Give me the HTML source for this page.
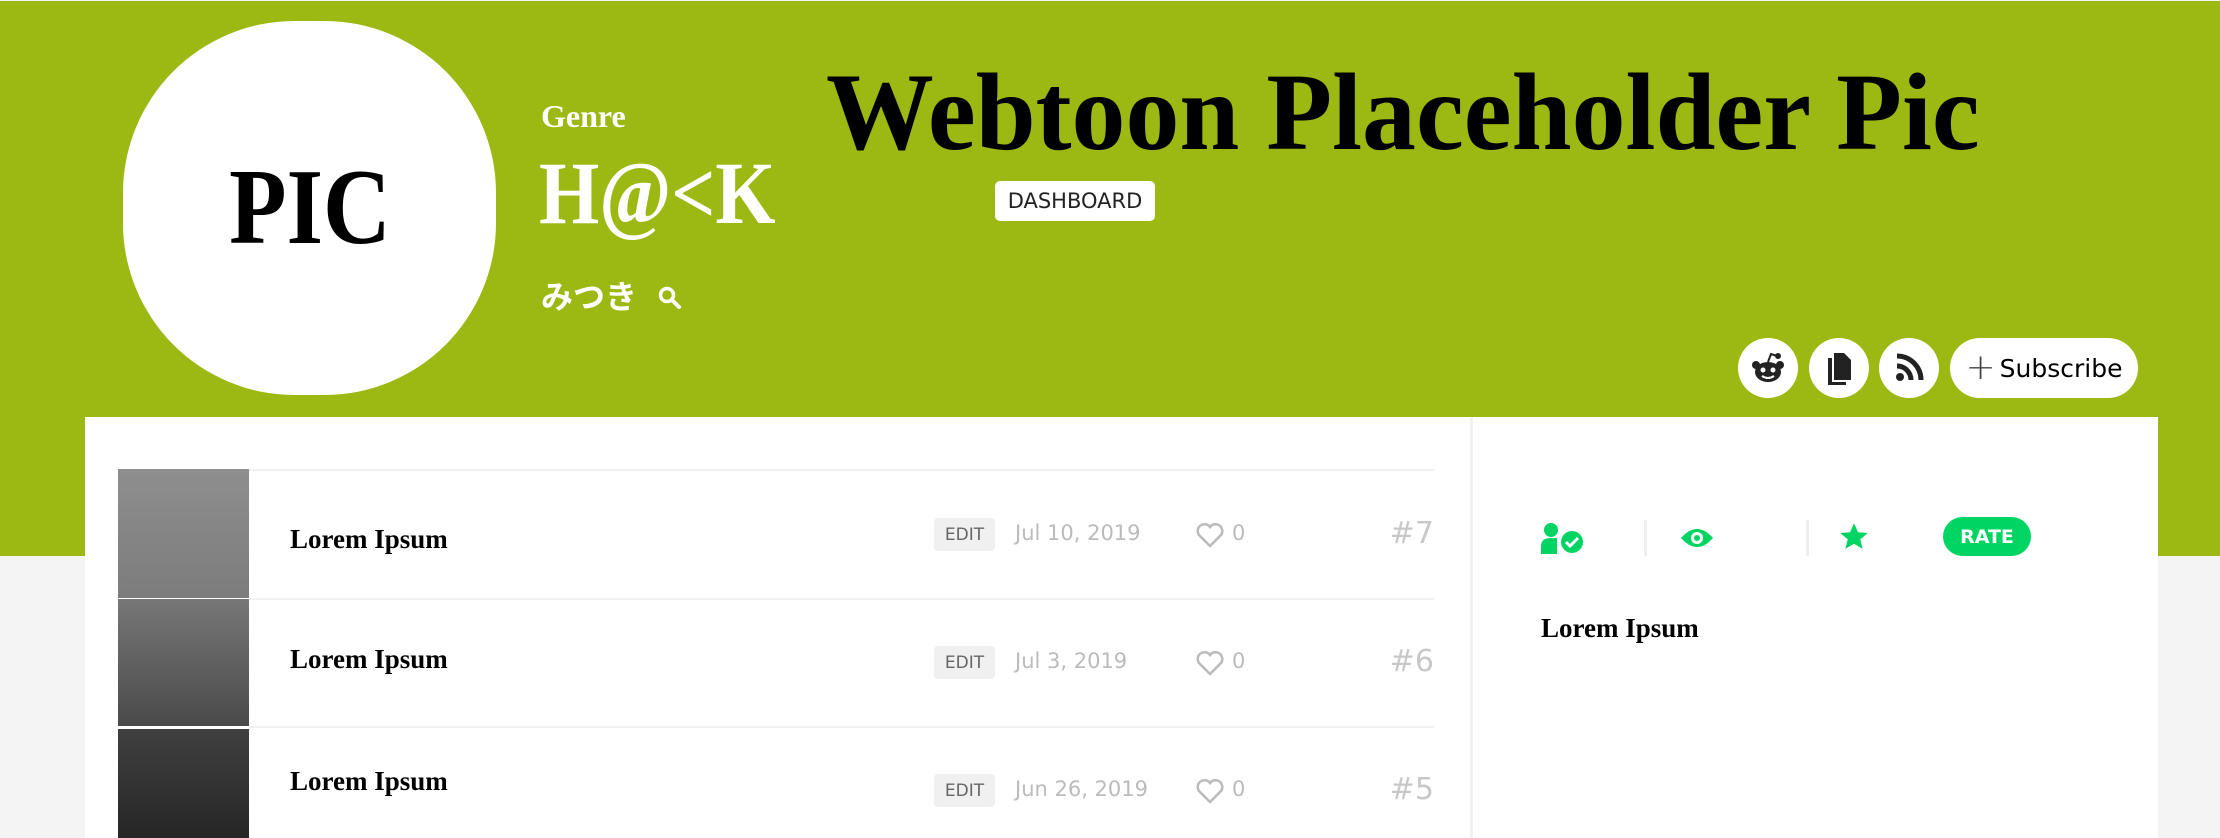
<!DOCTYPE html>
<html><head><meta charset="utf-8"><style>
*{margin:0;padding:0;box-sizing:border-box}
body{width:2220px;height:838px;overflow:hidden;background:#f4f4f4;position:relative;font-family:"Liberation Sans",sans-serif}
.hdr{position:absolute;left:0;top:1px;width:2220px;height:555px;background:#9cb813}
.a{position:absolute}
.serif{font-family:"Liberation Serif",serif;font-weight:bold}
.pic{left:123px;top:21px;width:373px;height:374px;background:#fff;border-radius:46%;display:flex;align-items:center;justify-content:center;color:#000}
.circ{width:60px;height:60px;border-radius:50%;background:#fff;top:338px;display:flex;align-items:center;justify-content:center}
.panel{left:85px;top:417px;width:2073px;height:421px;background:#fff}
.line{height:2px;background:#f1f1f1;left:249px;width:1185px}
.thumb{left:118px;width:131px}
.row-t{left:290px;font-size:27px;color:#000}
.edit{left:934px;width:61px;height:33px;background:#f0f0f0;border-radius:4px;font-size:17px;color:#666;display:flex;align-items:center;justify-content:center;font-family:"DejaVu Sans",sans-serif}
.date{left:1015px;font-size:21px;color:#bbb;font-family:"DejaVu Sans",sans-serif}
.heart{left:1196px}
.zero{left:1232px;font-size:21px;color:#bbb;font-family:"DejaVu Sans",sans-serif}
.num{right:786px;font-size:30px;color:#c8c8c8;font-family:"DejaVu Sans",sans-serif}
</style></head><body>
<div class="hdr"></div>
<div class="a pic serif"><span style="font-size:108px;display:inline-block;transform:scaleX(0.87)">PIC</span></div>
<div class="a serif" style="left:541px;top:98px;font-size:32px;color:#fff">Genre</div>
<div class="a serif" style="left:539px;top:146px;font-size:89px;color:#fff;line-height:1.1;transform:scaleX(0.87);transform-origin:left top;white-space:nowrap">H@&lt;K</div>
<div class="a" style="left:541px;top:272px;font-size:32px;font-weight:bold;color:#fff;font-family:'Liberation Sans','Noto Sans CJK JP',sans-serif">みつき</div>
<svg class="a" style="left:656px;top:284px" width="28" height="28" viewBox="0 0 28 28"><circle cx="11" cy="11" r="6.5" fill="none" stroke="#fff" stroke-width="3.5"/><path d="M16 16l7 7" stroke="#fff" stroke-width="4" stroke-linecap="round"/></svg>
<div class="a serif" style="left:826px;top:52px;font-size:110px;color:#000;line-height:1.1;white-space:nowrap;transform:scaleX(0.98);transform-origin:left top">Webtoon Placeholder Pic</div>
<div class="a" style="left:995px;top:181px;width:160px;height:40px;background:#fff;border-radius:5px;font-size:21px;color:#222;display:flex;align-items:center;justify-content:center;font-family:'DejaVu Sans',sans-serif">DASHBOARD</div>
<div class="a circ" style="left:1738px"><svg width="36" height="36" viewBox="0 0 36 36"><ellipse cx="18" cy="22" rx="13" ry="10" fill="#222"/><circle cx="6" cy="15" r="4" fill="#222"/><circle cx="30" cy="15" r="4" fill="#222"/><path d="M18 12l3-8 6 2" stroke="#222" stroke-width="2" fill="none"/><circle cx="28" cy="6" r="3" fill="#222"/><circle cx="13" cy="20" r="2.5" fill="#fff"/><circle cx="23" cy="20" r="2.5" fill="#fff"/><path d="M12 26q6 4 12 0" stroke="#fff" stroke-width="2" fill="none"/></svg></div>
<div class="a circ" style="left:1809px"><svg width="30" height="34" viewBox="0 0 30 34"><path d="M10 2h10l7 7v20h-17z" fill="#222"/><path d="M4 7h4v24h14v3h-18z" fill="#222"/></svg></div>
<div class="a circ" style="left:1879px"><svg width="30" height="30" viewBox="0 0 30 30"><circle cx="6" cy="24" r="4" fill="#222"/><path d="M3 13a14 14 0 0 1 14 14" stroke="#222" stroke-width="5" fill="none"/><path d="M3 3a24 24 0 0 1 24 24" stroke="#222" stroke-width="5" fill="none"/></svg></div>
<div class="a" style="left:1950px;top:338px;width:188px;height:60px;border-radius:30px;background:#fff;display:flex;align-items:center;justify-content:center;font-size:25px;color:#000;font-family:'DejaVu Sans',sans-serif"><span style="font-size:36px;font-weight:100;color:#444;margin-right:4px;line-height:1">+</span>Subscribe</div>
<div class="a panel"></div>
<div class="a" style="left:1470px;top:417px;width:3px;height:421px;background:#f1f1f1"></div>
<div class="a line" style="top:469px"></div>
<div class="a line" style="top:598px"></div>
<div class="a line" style="top:726px"></div>
<div class="a thumb" style="top:469px;height:129px;background:linear-gradient(#8e8e8e,#7c7c7c)"></div>
<div class="a thumb" style="top:599px;height:127px;background:linear-gradient(#777,#4a4a4a)"></div>
<div class="a thumb" style="top:729px;height:109px;background:linear-gradient(#404040,#262626)"></div>
<div class="a row-t serif" style="top:524px">Lorem Ipsum</div>
<div class="a row-t serif" style="top:644px">Lorem Ipsum</div>
<div class="a row-t serif" style="top:766px">Lorem Ipsum</div>
<div class="a edit" style="top:518px">EDIT</div>
<div class="a edit" style="top:646px">EDIT</div>
<div class="a edit" style="top:774px">EDIT</div>
<div class="a date" style="top:521px">Jul 10, 2019</div>
<div class="a date" style="top:649px">Jul 3, 2019</div>
<div class="a date" style="top:777px">Jun 26, 2019</div>
<svg class="a heart" style="top:522px" width="28" height="26" viewBox="0 0 28 26"><path d="M14 24L3 13a6 6 0 0 1 11-8a6 6 0 0 1 11 8z" fill="none" stroke="#bbb" stroke-width="2.5"/></svg>
<svg class="a heart" style="top:650px" width="28" height="26" viewBox="0 0 28 26"><path d="M14 24L3 13a6 6 0 0 1 11-8a6 6 0 0 1 11 8z" fill="none" stroke="#bbb" stroke-width="2.5"/></svg>
<svg class="a heart" style="top:778px" width="28" height="26" viewBox="0 0 28 26"><path d="M14 24L3 13a6 6 0 0 1 11-8a6 6 0 0 1 11 8z" fill="none" stroke="#bbb" stroke-width="2.5"/></svg>
<div class="a zero" style="top:521px">0</div>
<div class="a zero" style="top:649px">0</div>
<div class="a zero" style="top:777px">0</div>
<div class="a num" style="top:516px">#7</div>
<div class="a num" style="top:644px">#6</div>
<div class="a num" style="top:772px">#5</div>
<svg class="a" style="left:1541px;top:522px" width="46" height="32" viewBox="0 0 46 32"><circle cx="10" cy="8" r="7" fill="#00d564"/><path d="M0 32v-8q0-8 10-8h6v16z" fill="#00d564"/><circle cx="31" cy="20" r="11" fill="#00d564"/><path d="M25 20l4 4 8-8" stroke="#fff" stroke-width="3" fill="none"/></svg>
<div class="a" style="left:1644px;top:520px;width:3px;height:36px;background:#eee"></div>
<svg class="a" style="left:1679px;top:526px" width="36" height="24" viewBox="0 0 36 24"><path d="M2 12Q18-6 34 12Q18 30 2 12z" fill="#00d564"/><circle cx="18" cy="12" r="6" fill="#fff"/><circle cx="18" cy="12" r="3" fill="#00d564"/></svg>
<div class="a" style="left:1806px;top:520px;width:3px;height:36px;background:#eee"></div>
<svg class="a" style="left:1839px;top:522px" width="30" height="30" viewBox="0 0 24 24"><path d="M12 1l3.2 7.2 7.8.6-6 5.1 1.9 7.6L12 17.4 5.1 21.5 7 13.9 1 8.8l7.8-.6z" fill="#00d564"/></svg>
<div class="a" style="left:1943px;top:517px;width:88px;height:39px;border-radius:20px;background:#00d564;color:#fff;font-size:19px;font-weight:bold;display:flex;align-items:center;justify-content:center;font-family:'DejaVu Sans',sans-serif">RATE</div>
<div class="a serif" style="left:1541px;top:613px;font-size:27px;color:#000">Lorem Ipsum</div>
</body></html>
